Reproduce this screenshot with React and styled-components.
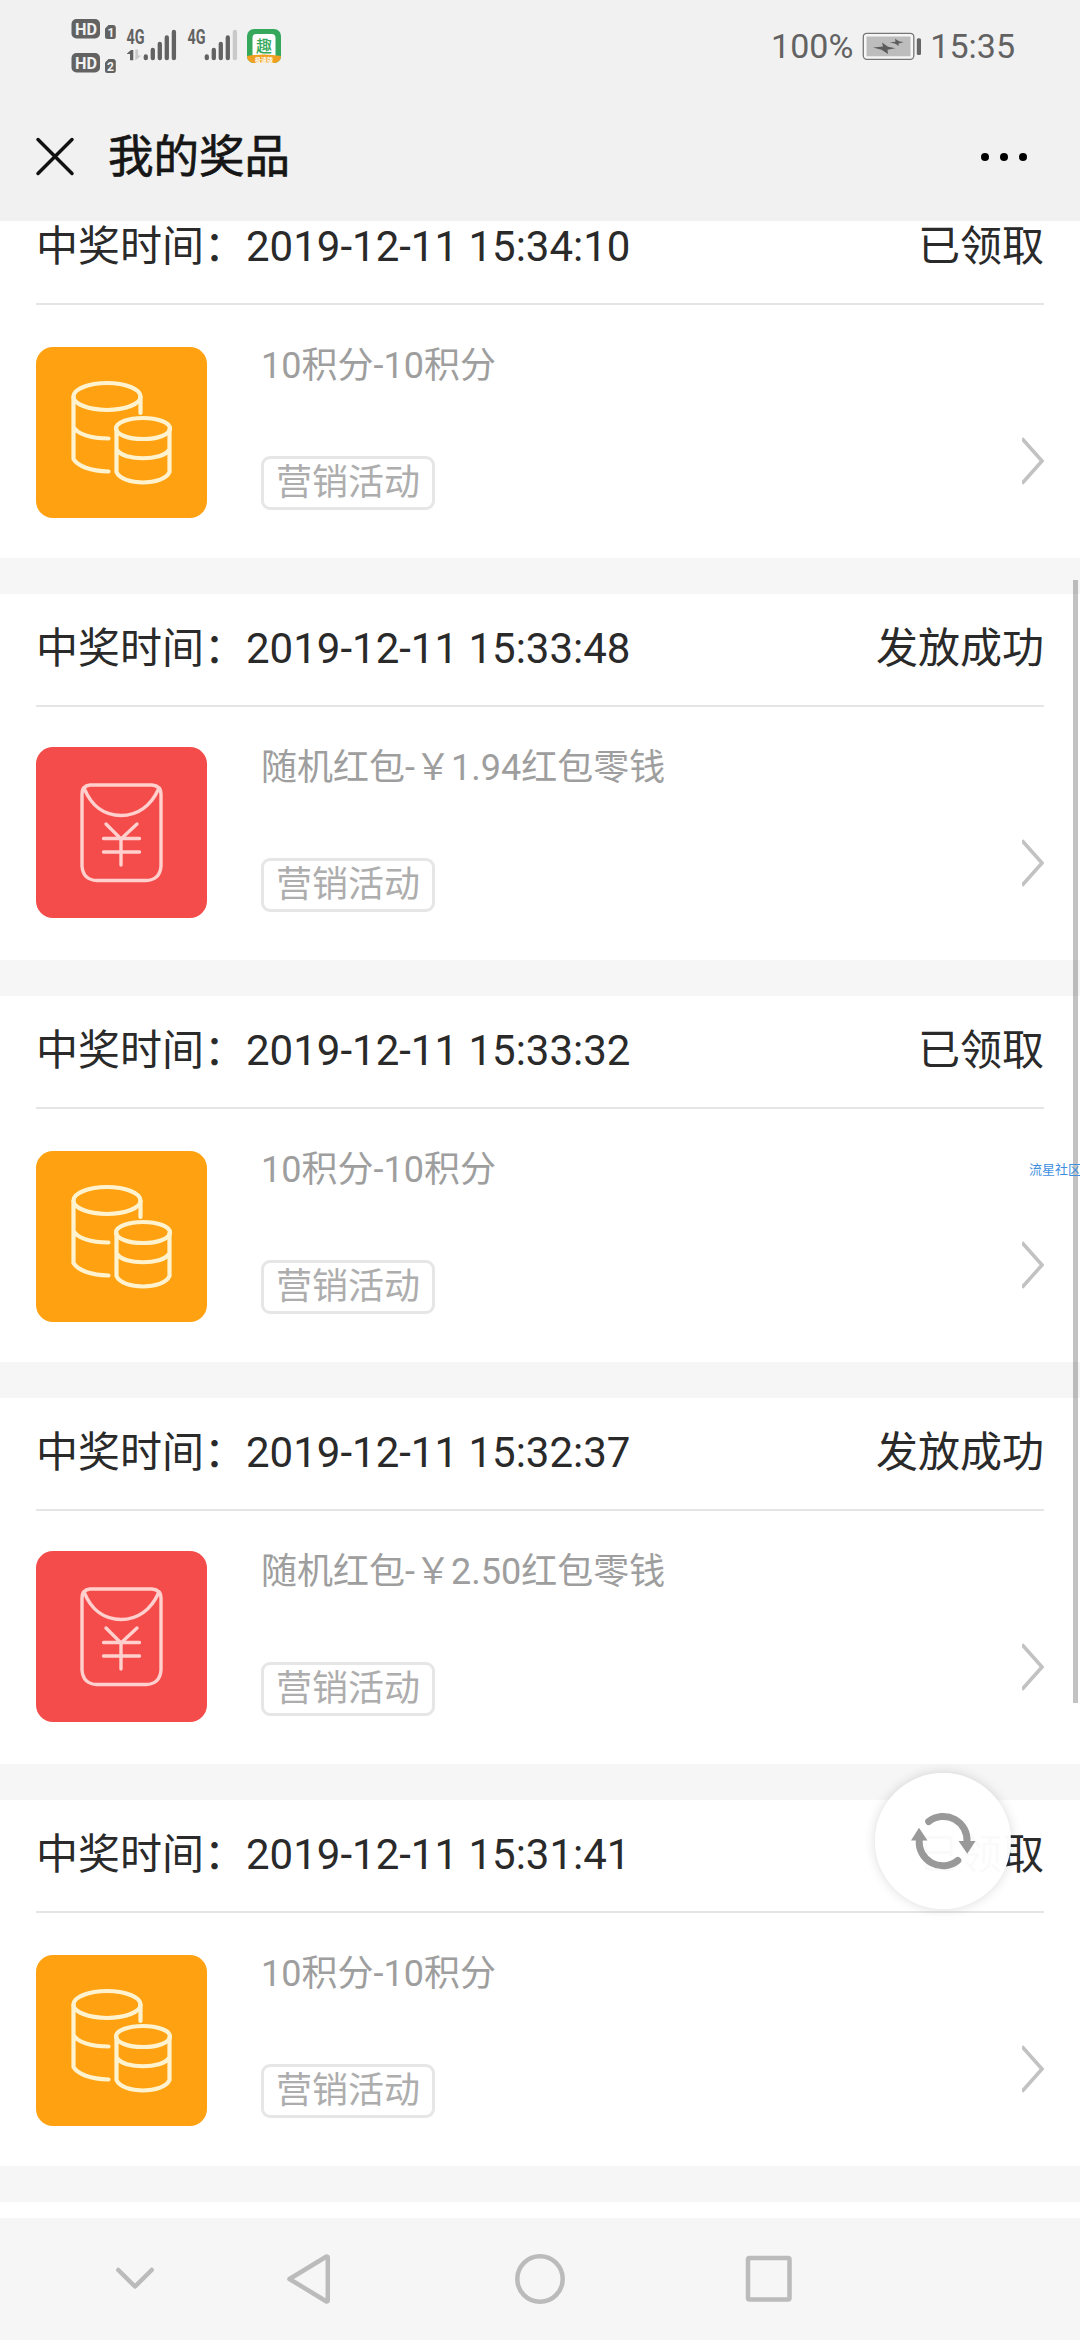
import React from 'react';
import styled, { createGlobalStyle } from 'styled-components';

const prizes = [
  { type: 'points', time: '2019-12-11 15:34:10', status: '已领取', name: '10积分-10积分' },
  { type: 'packet', time: '2019-12-11 15:33:48', status: '发放成功', name: '随机红包-￥1.94红包零钱' },
  { type: 'points', time: '2019-12-11 15:33:32', status: '已领取', name: '10积分-10积分' },
  { type: 'packet', time: '2019-12-11 15:32:37', status: '发放成功', name: '随机红包-￥2.50红包零钱' },
  { type: 'points', time: '2019-12-11 15:31:41', status: '已领取', name: '10积分-10积分' },
];

const SignalIcons = () => (
  <svg width="220" height="70" viewBox="66 10 220 70" fontWeight="bold">
    {/* HD badges */}
    <rect x="71.5" y="19" width="28.5" height="19.5" rx="5" fill="#626262" />
    <text x="75" y="34.6" fontSize="16" textLength="22" lengthAdjust="spacingAndGlyphs" fill="#f1f1f1">HD</text>
    <path d="M108.5 25h5q2.3 0 2.3 2.5v9q0 2.5-2.5 2.5h-5.8q-2.5 0-2.5-2.5v-8z" fill="#626262" />
    <text x="107.4" y="36.8" fontSize="12" fill="#f1f1f1">1</text>
    <rect x="71.5" y="53" width="28.5" height="19.5" rx="5" fill="#626262" />
    <text x="75" y="68.6" fontSize="16" textLength="22" lengthAdjust="spacingAndGlyphs" fill="#f1f1f1">HD</text>
    <path d="M108.5 59h5q2.3 0 2.3 2.5v9q0 2.5-2.5 2.5h-5.8q-2.5 0-2.5-2.5v-8z" fill="#626262" />
    <text x="107" y="70.8" fontSize="12" fill="#f1f1f1">2</text>
    {/* SIM 1 */}
    <text x="126.5" y="43.5" fontSize="20" textLength="18" lengthAdjust="spacingAndGlyphs" fill="#626262">4G</text>
    <path d="M127 53.5l4-3.5h2.3v10.3h-3.3v-6.3h-3z" fill="#626262" />
    <path d="M135.3 49.5v11l6-5h-3.2v-6z" fill="#c9c9c9" />
    <g stroke="#626262" strokeWidth="4.3" strokeLinecap="round">
      <path d="M145.800 56.500v1.700M152.800 50v8.200M159.800 44v14.200M166.800 37.500v20.700M173.900 32v26.200" />
      {/* SIM 2 */}
      <path d="M206.800 56.500v1.700M213.800 50v8.200M220.800 44v14.200M227.800 37.500v20.700" />
      <path d="M234.900 32v26.200" stroke="#c9c9c9" />
    </g>
    <text x="187.5" y="43.5" fontSize="20" textLength="18" lengthAdjust="spacingAndGlyphs" fill="#626262">4G</text>
    {/* app notification */}
    <clipPath id="app"><rect x="247" y="29" width="34" height="34" rx="7" /></clipPath>
    <g clipPath="url(#app)">
      <rect x="247" y="29" width="34" height="34" fill="#35a85c" />
      <rect x="252.5" y="34" width="23" height="26" rx="4" fill="#fff" />
      <path d="M247 56q17-3 34 0v7h-34z" fill="#f0a020" />
    </g>
    <text x="256" y="52" fontSize="16" fontWeight="500" fill="#35a85c">趣</text>
    <text x="255" y="61.5" fontSize="6" fill="#fff">极速版</text>
  </svg>
);

const Battery = () => (
  <svg width="60" height="30" viewBox="861 30 60 30">
    <rect x="862.3" y="32.3" width="50.5" height="26" rx="3.5" fill="#f6f6f6" stroke="#777" strokeWidth="1.3" />
    <rect x="865.5" y="35.5" width="44" height="19.8" fill="#bdbdbd" />
    <path d="M872 46.500l10-1 -1-4 6 4.300 7.500 1.500 -8 1.500 .500 4.200 -6.500-4.300zM888.500 41.500l6-.700 -.500-3 4 2.500 4.500 1 -5 1.200 .300 2.500 -4-2.500z" fill="#5c5c5c" />
    <rect x="915.8" y="37.3" width="4.2" height="16.7" rx="1.5" fill="#666" />
  </svg>
);

const CoinsIcon = () => (
  <svg width="171" height="171" viewBox="0 0 171 171" fill="none" stroke="#fff3cf" strokeWidth="4.2" strokeLinecap="round">
    <ellipse cx="71" cy="49.5" rx="33.5" ry="13.5" />
    <path d="M37.500 50v62c4 7 17 12 35 12.500M37.500 80c4 7 17 11.500 35 11.500M104.500 50v16" />
    <ellipse cx="107" cy="81.5" rx="27" ry="10.5" />
    <path d="M80.500 82v43c6 14 47 14 53 0V82M81 103c7 11 45 11 52 0" />
  </svg>
);

const PacketIcon = () => (
  <svg width="171" height="171" viewBox="0 0 171 171" fill="none" stroke="#ffd0cd" strokeWidth="3.4" strokeLinecap="round">
    <path d="M54 38h62q9 1 9 9v72q-1 14-15 14.500H61q-14-.500-15-14.500V47q0-8 8-9z" />
    <path d="M48.500 42c7 17 20 26.500 36.500 26.500S115 59 122.500 42" />
    <path d="M70 77l15 15 16-15M85 92v26M67.500 91.500h36M67.500 105h36" />
  </svg>
);

const App = () => (
  <Screen>
    <GlobalStyle />
    <StatusBar>
      <SignalIcons />
      <Power>
        <span>100%</span>
        <Battery />
        <span>15:35</span>
      </Power>
    </StatusBar>
    <TitleBar>
      <svg width="40" height="40" viewBox="0 0 40 40" stroke="#111" strokeWidth="3.5" strokeLinecap="round">
        <path d="M3 2.500L37 36.500M37 2.500L3 36.500" />
      </svg>
      <h1>我的奖品</h1>
      <Dots><i /><i /><i /></Dots>
    </TitleBar>
    <Viewport>
      <List>
        {prizes.map((prize) => (
          <Card key={prize.time}>
            <CardHead>
              <span>中奖时间：{prize.time}</span>
              <span>{prize.status}</span>
            </CardHead>
            <CardBody>
              <Thumb $type={prize.type}>
                {prize.type === 'points' ? <CoinsIcon /> : <PacketIcon />}
              </Thumb>
              <Info>
                <Name>{prize.name}</Name>
                <Tag>营销活动</Tag>
              </Info>
              <Arrow width="22" height="48" viewBox="0 0 22 48">
                <path d="M0 1.500L20 24L0 46.500" />
              </Arrow>
            </CardBody>
          </Card>
        ))}
      </List>
    </Viewport>
    <NavBar>
      <svg width="720" height="60" viewBox="100 2249 720 60">
        <path d="M118.300 2270l16.700 16.500 16.700-16.500" />
        <path d="M289.500 2279L326.500 2256.500q1.300 0 1.300 1.500v42q0 1.500-1.300 1.500z" />
        <circle cx="540" cy="2279" r="22.7" />
        <rect x="748" y="2258" width="41.5" height="41.5" rx="1.5" />
      </svg>
    </NavBar>
    <ScrollThumb />
    <Refresh>
      <svg width="70" height="64" viewBox="-35 -32 70 64">
        <path d="M-14.300 -19.500A23.700 23.700 0 0 1 24 1" />
        <path d="M14.800 19.500A23.700 23.700 0 0 1 -23.700 -1" />
        <path d="M15.500 0H32.500L24.300 12.800zM-32 -.500H-15.500L-24-13.200z" fill="#999" stroke="none" />
      </svg>
    </Refresh>
    <Watermark>流星社区</Watermark>
  </Screen>
);

const GlobalStyle = createGlobalStyle`
  * { box-sizing: border-box; }
  body { margin: 0; background: #fff; }
  svg { display: block; flex: none; }
`;

const Screen = styled.div`
  position: relative;
  display: flex;
  flex-direction: column;
  width: 1080px;
  height: 2340px;
  overflow: hidden;
  background: #fff;
  font-family: Roboto, "Noto Sans CJK SC", sans-serif;
  color: #2a2a2a;
`;

const StatusBar = styled.div`
  display: flex;
  justify-content: space-between;
  height: 92px;
  padding: 10px 65px 0 66px;
  background: #f1f1f1;
`;

const Power = styled.div`
  display: flex;
  align-items: center;
  gap: 8.5px;
  height: 72px;
  font-size: 34px;
  color: #626262;
`;

const TitleBar = styled.header`
  display: flex;
  align-items: center;
  height: 129px;
  padding: 0 53px 0 35px;
  background: #f1f1f1;

  h1 {
    margin: 2px auto 0 33px;
    font-size: 45.5px;
    font-weight: 400;
    line-height: 60px;
    color: #161616;
    -webkit-text-stroke: 0.7px #161616;
  }
`;

const Dots = styled.div`
  display: flex;
  gap: 11px;

  i {
    width: 8px;
    height: 8px;
    border-radius: 50%;
    background: #000;
  }
`;

const Viewport = styled.main`
  flex: 1;
  min-height: 0;
  overflow: hidden;
`;

/* scrolled a little past the top of the first card */
const List = styled.div`
  margin-top: -29px;
`;

const Card = styled.section`
  height: 402px;
  padding: 0 36px;
  border-bottom: 36px solid #f6f6f6;
`;

const CardHead = styled.div`
  display: flex;
  align-items: center;
  justify-content: space-between;
  height: 113px;
  padding-bottom: 2px;
  border-bottom: 2px solid #e5e5e5;
  font-size: 42px;
  line-height: 60px;
`;

const CardBody = styled.div`
  display: flex;
  align-items: flex-start;
  padding-top: 40px;
`;

const Thumb = styled.div`
  width: 171px;
  height: 171px;
  margin-top: ${(p) => (p.$type === 'points' ? 2 : 0)}px;
  border-radius: 17px;
  background: ${(p) => (p.$type === 'points' ? '#ffa110' : '#f44c4a')};
`;

const Info = styled.div`
  flex: 1;
  margin: -1px 0 0 54px;
`;

const Name = styled.div`
  height: 112px;
  font-size: 36px;
  line-height: 44px;
  color: #9e9e9e;
`;

const Tag = styled.div`
  display: inline-flex;
  align-items: center;
  height: 54px;
  padding: 0 12px;
  border: 3px solid #e6e6e6;
  border-radius: 9px;
  font-size: 36px;
  line-height: 48px;
  color: #adadad;
`;

const Arrow = styled.svg`
  margin-top: 92px;
  fill: none;
  stroke: #c2c2c2;
  stroke-width: 3.5;
`;

const NavBar = styled.nav`
  display: flex;
  align-items: center;
  height: 122px;
  padding-left: 100px;
  background: #f6f6f6;

  svg {
    fill: none;
    stroke: #bbb;
    stroke-width: 4.5;
    stroke-linecap: round;
    stroke-linejoin: round;
  }
`;

const ScrollThumb = styled.div`
  position: absolute;
  top: 580px;
  right: 2px;
  width: 5px;
  height: 1123px;
  background: rgba(0, 0, 0, 0.24);
`;

const Refresh = styled.div`
  position: absolute;
  top: 1773px;
  left: 875px;
  display: flex;
  align-items: center;
  justify-content: center;
  width: 136px;
  height: 136px;
  border-radius: 50%;
  background: rgba(255, 255, 255, 0.98);
  box-shadow: 0 0 12px rgba(0, 0, 0, 0.15);

  svg {
    fill: none;
    stroke: #999;
    stroke-width: 7;
    stroke-linecap: round;
  }
`;

const Watermark = styled.div`
  position: absolute;
  top: 1160px;
  left: 1029px;
  font-size: 13px;
  line-height: 20px;
  white-space: nowrap;
  color: #3f8fe0;
`;

export default App;
